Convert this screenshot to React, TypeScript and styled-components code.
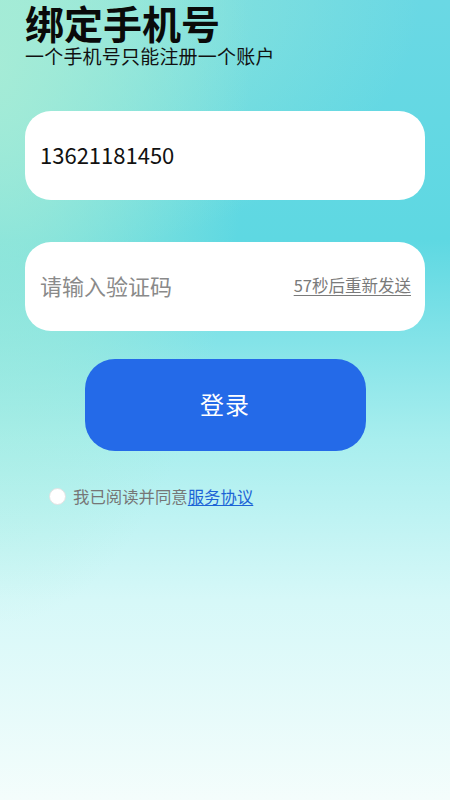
import React, { useState } from "react";
import styled, { createGlobalStyle } from "styled-components";

const GlobalStyle = createGlobalStyle`
  html, body {
    margin: 0;
    padding: 0;
  }
  body {
    font-family: "Noto Sans CJK SC", "Noto Sans", sans-serif;
  }
  * {
    box-sizing: border-box;
  }
`;

const Page = styled.div`
  min-height: 100vh;
  width: 100%;
  padding: 0 25px;
  display: flex;
  flex-direction: column;
  background:
    radial-gradient(ellipse 250px 560px at 0% 8%, rgba(166, 236, 214, 0.95), rgba(166, 236, 214, 0) 100%),
    radial-gradient(ellipse 420px 260px at 0% 0%, rgba(172, 238, 212, 0.7), rgba(172, 238, 212, 0) 100%),
    linear-gradient(180deg, #6ad8e4 0%, #5ed8e2 30%, #a8eeee 55%, #d6f8f8 75%, #f4fdfc 100%);
`;

const Title = styled.h1`
  margin: 0;
  font-size: 39px;
  line-height: 44px;
  font-weight: 700;
  color: #0a0a0a;
`;

const Subtitle = styled.p`
  margin: 0;
  font-size: 19px;
  line-height: 24px;
  color: #111;
  letter-spacing: 0.2px;
`;

const Field = styled.div<{ $top: number }>`
  margin-top: ${(p) => p.$top}px;
  height: 89px;
  border-radius: 26px;
  background: #fff;
  display: flex;
  align-items: center;
  justify-content: space-between;
  padding: 0 14px 4px 15px;
`;

const Input = styled.input`
  flex: 1;
  min-width: 0;
  border: none;
  outline: none;
  background: transparent;
  font-family: inherit;
  font-size: 22px;
  color: #111;
  padding: 0;
  &::placeholder {
    color: #8a8a8a;
  }
`;

const Resend = styled.span`
  font-size: 16.5px;
  color: #7a7a7a;
  text-decoration: underline;
  text-underline-offset: 3px;
  white-space: nowrap;
`;

const LoginButton = styled.button`
  align-self: center;
  margin-top: 28px;
  width: 281px;
  height: 92px;
  border: none;
  border-radius: 30px;
  background: #246ae8;
  color: #fff;
  font-family: inherit;
  font-size: 24px;
  line-height: 1;
  letter-spacing: 1px;
  padding-bottom: 3px;
  cursor: pointer;
`;

const AgreeRow = styled.label`
  margin: 33px 0 0 24px;
  display: flex;
  align-items: center;
  gap: 7px;
  font-size: 16.4px;
  color: #767676;
  cursor: pointer;
`;

const Radio = styled.span<{ $on: boolean }>`
  width: 17px;
  height: 17px;
  border-radius: 50%;
  background: ${(p) => (p.$on ? "#246ae8" : "#fff")};
  border: 1px solid #e2e2e2;
  flex-shrink: 0;
`;

const Link = styled.a`
  color: #1c64d6;
  text-decoration: underline;
  text-underline-offset: 2px;
`;

const App: React.FC = () => {
  const [agree, setAgree] = useState(false);
  return (
    <>
      <GlobalStyle />
      <Page>
        <Title>绑定手机号</Title>
        <Subtitle>一个手机号只能注册一个账户</Subtitle>
        <Field $top={43}>
          <Input defaultValue="13621181450" />
        </Field>
        <Field $top={42}>
          <Input placeholder="请输入验证码" />
          <Resend>57秒后重新发送</Resend>
        </Field>
        <LoginButton>登录</LoginButton>
        <AgreeRow onClick={() => setAgree(!agree)}>
          <Radio $on={agree} />
          <span>
            我已阅读并同意<Link>服务协议</Link>
          </span>
        </AgreeRow>
      </Page>
    </>
  );
};

export default App;
